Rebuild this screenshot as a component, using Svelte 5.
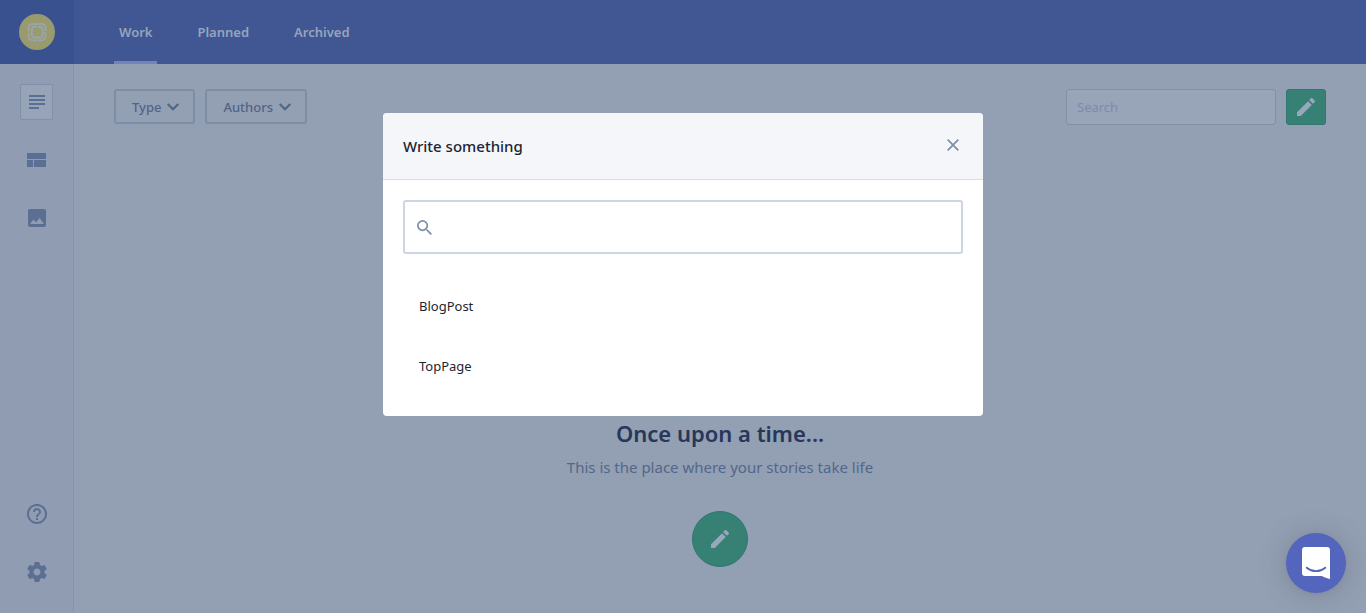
<script>
  let search = $state('');
  let query = $state('');
  const tabs = ['Work', 'Planned', 'Archived'];
  const filters = ['Type', 'Authors'];
  const models = ['BlogPost', 'TopPage'];
  const shown = $derived(models.filter((m) => m.toLowerCase().includes(query.toLowerCase())));
</script>

{#snippet pencil(size)}
  <svg width={size} height={size} viewBox="0 0 18 18" fill="currentColor" aria-hidden="true">
    <path d="M0 14.25V18h3.75L14.81 6.94l-3.75-3.75L0 14.25zM17.71 4.04a1 1 0 0 0 0-1.41L15.37.29a1 1 0 0 0-1.41 0l-1.83 1.83 3.75 3.75 1.83-1.83z" />
  </svg>
{/snippet}

<div class="app">
  <aside class="sidebar">
    <a class="logo" href="#home" aria-label="Home">
      <svg width="36" height="36" viewBox="0 0 36 36" fill="none">
        <circle cx="18" cy="18" r="18" fill="#999b6f" />
        <g stroke="#98a5af" stroke-width="1.8">
          <path d="M18.500 9.800h4.300a3.800 3.800 0 0 1 3.800 3.800v3.400M26.300 18.500v3.800a4 4 0 0 1-3.900 4H19M17.500 26.300h-4a3.800 3.800 0 0 1-3.800-3.800V19M9.700 17.500v-3.900a3.800 3.800 0 0 1 3.800-3.800h3.300l1.200 1.400" />
          <path d="M13 18.200v-3.200a2.200 2.200 0 0 1 2.200-2.200h2.300M18.800 12.800h2.600a2.200 2.200 0 0 1 2.200 2.200v2.800l1.300 1.200M23.500 19v2.300a2.200 2.200 0 0 1-2.200 2.200h-2.800l-1.200 1.300M17.300 23.500h-2.100a2.200 2.200 0 0 1-2.200-2.200v-1.800l-1.400-1.200" />
        </g>
      </svg>
    </a>
    <nav class="side-nav" aria-label="Sections">
      <a class="side-link active" href="#content" aria-label="Content">
        <svg width="16" height="14" viewBox="0 0 16 14" fill="currentColor"><path d="M0 0h16v2H0zM0 4h16v2H0zM0 8h16v2H0zM0 12h10v2H0z" /></svg>
      </a>
      <a class="side-link" href="#models" aria-label="Models">
        <svg width="19" height="14" viewBox="0 0 19 14" fill="currentColor"><path d="M0 0h19v6H0zM0 7h6v7H0zM7 7h12v7H7z" /></svg>
      </a>
      <a class="side-link" href="#media" aria-label="Media">
        <svg width="18" height="18" viewBox="0 0 18 18" fill="currentColor"><path fill-rule="evenodd" d="M2 0h14a2 2 0 0 1 2 2v14a2 2 0 0 1-2 2H2a2 2 0 0 1-2-2V2a2 2 0 0 1 2-2zm0 15h14l-4.500-6-3.500 4.500-2.500-3z" /></svg>
      </a>
      <a class="side-link help" href="#help" aria-label="Help">
        <svg width="20" height="20" viewBox="2 2 20 20" fill="currentColor"><path d="M11 18h2v-2h-2v2zm1-16C6.480 2 2 6.480 2 12s4.480 10 10 10 10-4.480 10-10S17.520 2 12 2zm0 18c-4.410 0-8-3.590-8-8s3.590-8 8-8 8 3.590 8 8-3.590 8-8 8zm0-14c-2.210 0-4 1.790-4 4h2c0-1.100.9-2 2-2s2 .9 2 2c0 2-3 1.750-3 5h2c0-2.250 3-2.500 3-5 0-2.210-1.790-4-4-4z" /></svg>
      </a>
      <a class="side-link" href="#settings" aria-label="Settings">
        <svg width="20" height="20" viewBox="2 2 20 20" fill="currentColor"><path d="M19.430 12.980c.04-.32.07-.64.07-.98s-.03-.66-.07-.98l2.110-1.650c.19-.15.24-.42.12-.64l-2-3.460c-.12-.22-.39-.3-.61-.22l-2.490 1c-.52-.4-1.080-.73-1.690-.98l-.38-2.650A.488.488 0 0 0 14 2h-4c-.25 0-.46.18-.49.42l-.38 2.650c-.61.25-1.170.59-1.690.98l-2.490-1c-.23-.09-.49 0-.61.22l-2 3.460c-.13.22-.07.49.12.64l2.110 1.650c-.04.32-.07.65-.07.98s.03.66.07.98l-2.110 1.650c-.19.15-.24.42-.12.64l2 3.460c.12.22.39.3.61.22l2.490-1c.52.4 1.080.73 1.690.98l.38 2.650c.03.24.24.42.49.42h4c.25 0 .46-.18.49-.42l.38-2.650c.61-.25 1.170-.59 1.690-.98l2.490 1c.23.09.49 0 .61-.22l2-3.460c.12-.22.07-.49-.12-.64l-2.110-1.650zM12 15.500c-1.930 0-3.500-1.570-3.500-3.500s1.570-3.500 3.500-3.500 3.500 1.570 3.500 3.500-1.570 3.500-3.500 3.500z" /></svg>
      </a>
    </nav>
  </aside>

  <div class="page">
    <header class="topbar">
      <nav class="tabs" aria-label="Status">
        {#each tabs as tab, i}
          <a class="tab" class:current={i === 0} href={'#' + tab.toLowerCase()}>{tab}</a>
        {/each}
      </nav>
    </header>

    <main>
      <div class="toolbar">
        {#each filters as filter}
          <button class="filter" type="button">
            {filter}
            <svg width="12" height="8" viewBox="0 0 12 8" fill="none" stroke="currentColor" stroke-width="2.200"><path d="M.7 1L6 6.300 11.300 1" /></svg>
          </button>
        {/each}
        <input class="search" type="search" placeholder="Search" aria-label="Search" bind:value={search} />
        <button class="write" type="button" aria-label="Write">{@render pencil(18)}</button>
      </div>

      <section class="empty">
        <h1>Once upon a time...</h1>
        <p>This is the place where your stories take life</p>
        <button class="write round" type="button" aria-label="Write a story">{@render pencil(18)}</button>
      </section>
    </main>
  </div>
</div>

<div class="backdrop">
  <div class="dialog" role="dialog" aria-modal="true" aria-labelledby="dialog-title">
    <div class="dialog-head">
      <h2 id="dialog-title">Write something</h2>
      <button class="close" type="button" aria-label="Close">
        <svg width="12" height="12" viewBox="0 0 12 12" fill="none" stroke="currentColor" stroke-width="1.800"><path d="M.7.7l10.600 10.600M11.300.7L.7 11.300" /></svg>
      </button>
    </div>
    <div class="dialog-body">
      <label class="finder">
        <svg width="15" height="15" viewBox="3 3 17.500 17.500" fill="currentColor"><path d="M15.500 14h-.79l-.28-.27A6.471 6.471 0 0 0 16 9.500 6.500 6.500 0 1 0 9.500 16c1.610 0 3.090-.59 4.230-1.570l.27.28v.79l5 4.990L20.490 19l-4.990-5zm-6 0C7.010 14 5 11.990 5 9.500S7.010 5 9.500 5 14 7.010 14 9.500 11.990 14 9.500 14z" /></svg>
        <input type="text" aria-label="Find a type" bind:value={query} />
      </label>
      <ul>
        {#each shown as model}
          <li><button type="button">{model}</button></li>
        {/each}
      </ul>
    </div>
  </div>
</div>

<button class="chat" type="button" aria-label="Open chat">
  <svg width="28" height="32" viewBox="0 0 28 32" fill="none">
    <path fill="#fff" d="M3 0h22a3 3 0 0 1 3 3v29c-3-.6-5.500-1.600-8.200-3H3a3 3 0 0 1-3-3V3a3 3 0 0 1 3-3z" />
    <path d="M4.700 20.700c5.500 4.600 13.100 4.600 18.600 0" stroke="#5465bd" stroke-width="1.800" stroke-linecap="round" />
  </svg>
</button>

<style>
  :global(body) {
    margin: 0;
    background: #939fb3;
  }
  :global(*) {
    box-sizing: border-box;
  }
  .app,
  .backdrop {
    font-family: 'Noto Sans', sans-serif;
  }
  button,
  input {
    font-family: inherit;
    margin: 0;
    outline: none;
  }
  button {
    cursor: pointer;
  }
  svg {
    display: block;
    flex: none;
  }
  .app {
    display: flex;
    min-height: 100vh;
  }
  .sidebar {
    width: 74px;
    display: flex;
    flex-direction: column;
    background: #909cb1;
  }
  .logo {
    height: 64px;
    display: grid;
    place-items: center;
    background: #3a5190;
  }
  .side-nav {
    flex: 1;
    display: flex;
    flex-direction: column;
    align-items: center;
    gap: 22px;
    padding: 20px 0 23px;
    border-right: 1px solid #8794ab;
  }
  .side-link {
    width: 33px;
    height: 36px;
    display: grid;
    place-items: center;
    border: 1px solid transparent;
    border-radius: 2px;
    color: #5a6f91;
  }
  .side-link.active {
    background: #97a4b7;
    border-color: #7f90a9;
  }
  .help {
    margin-top: auto;
  }
  .page {
    flex: 1;
    min-width: 0;
  }
  .topbar {
    height: 64px;
    background: #415794;
    padding: 0 40px;
  }
  .tabs {
    display: flex;
    height: 100%;
    gap: 35px;
  }
  .tab {
    display: flex;
    align-items: center;
    padding: 3px 5px 0;
    border-bottom: 3px solid transparent;
    color: #97a4bc;
    font-size: 13px;
    font-weight: 600;
    text-decoration: none;
  }
  .tab.current {
    border-color: #7583bb;
  }
  .toolbar {
    display: flex;
    align-items: flex-start;
    gap: 10px;
    padding: 25px 40px 0;
  }
  .filter {
    height: 35px;
    display: flex;
    align-items: center;
    gap: 6px;
    padding: 0 14px 0 16px;
    border: 2px solid #7c8da6;
    border-radius: 3px;
    background: none;
    color: #4f6487;
    font-size: 13px;
    font-weight: 500;
  }
  .search {
    width: 210px;
    height: 36px;
    margin-left: auto;
    padding: 0 10px;
    border: 1px solid #7f90a8;
    border-radius: 3px;
    background: #98a4b8;
    color: #4f6487;
    font-size: 13px;
    appearance: none;
  }
  .search::placeholder {
    color: #7b8caa;
  }
  .write {
    width: 40px;
    height: 36px;
    display: grid;
    place-items: center;
    padding: 0;
    border: 1px solid #2f7870;
    border-radius: 3px;
    background: #368074;
    color: #9aa6bc;
  }
  .write.round {
    width: 56px;
    height: 56px;
    border-radius: 50%;
  }
  .empty {
    display: flex;
    flex-direction: column;
    align-items: center;
    padding: 292px 20px 40px;
    text-align: center;
  }
  h1 {
    margin: 0;
    color: #26375a;
    font-size: 22px;
    font-weight: 600;
    line-height: 32px;
  }
  p {
    margin: 6px 0 32px;
    color: #526789;
    font-size: 15px;
    line-height: 24px;
  }
  .backdrop {
    position: fixed;
    inset: 0;
    display: flex;
    justify-content: center;
    align-items: flex-start;
    padding: 113px 20px 20px;
  }
  .dialog {
    width: 100%;
    max-width: 600px;
    overflow: hidden;
    border-radius: 4px;
    background: #fff;
    color: #1f2433;
  }
  .dialog-head {
    height: 67px;
    display: flex;
    align-items: center;
    justify-content: space-between;
    padding: 0 20px;
    border-bottom: 1px solid #d9dde5;
    background: #f4f6fa;
  }
  h2 {
    margin: 0;
    font-size: 15px;
    font-weight: 500;
  }
  .close {
    padding: 4px;
    margin-bottom: 3px;
    border: 0;
    background: none;
    color: #7f90aa;
  }
  .dialog-body {
    padding: 20px;
  }
  .finder {
    height: 54px;
    display: flex;
    align-items: center;
    gap: 10px;
    padding: 0 12px;
    border: 2px solid #cdd4e2;
    border-radius: 3px;
    color: #7f90aa;
  }
  .finder input {
    flex: 1;
    min-width: 0;
    height: 100%;
    border: 0;
    background: none;
    font-size: 15px;
  }
  ul {
    list-style: none;
    margin: 22px 0 0;
    padding: 0;
  }
  li button {
    width: 100%;
    height: 60px;
    padding: 0 16px;
    border: 0;
    background: none;
    color: #1f2433;
    font-size: 13px;
    text-align: left;
  }
  .chat {
    position: fixed;
    right: 20px;
    bottom: 20px;
    width: 60px;
    height: 60px;
    display: grid;
    place-items: center;
    padding: 0;
    border: 0;
    border-radius: 50%;
    background: #5465bd;
    box-shadow: 0 1px 6px rgba(0, 0, 0, 0.06), 0 2px 32px rgba(0, 0, 0, 0.16);
  }
</style>
